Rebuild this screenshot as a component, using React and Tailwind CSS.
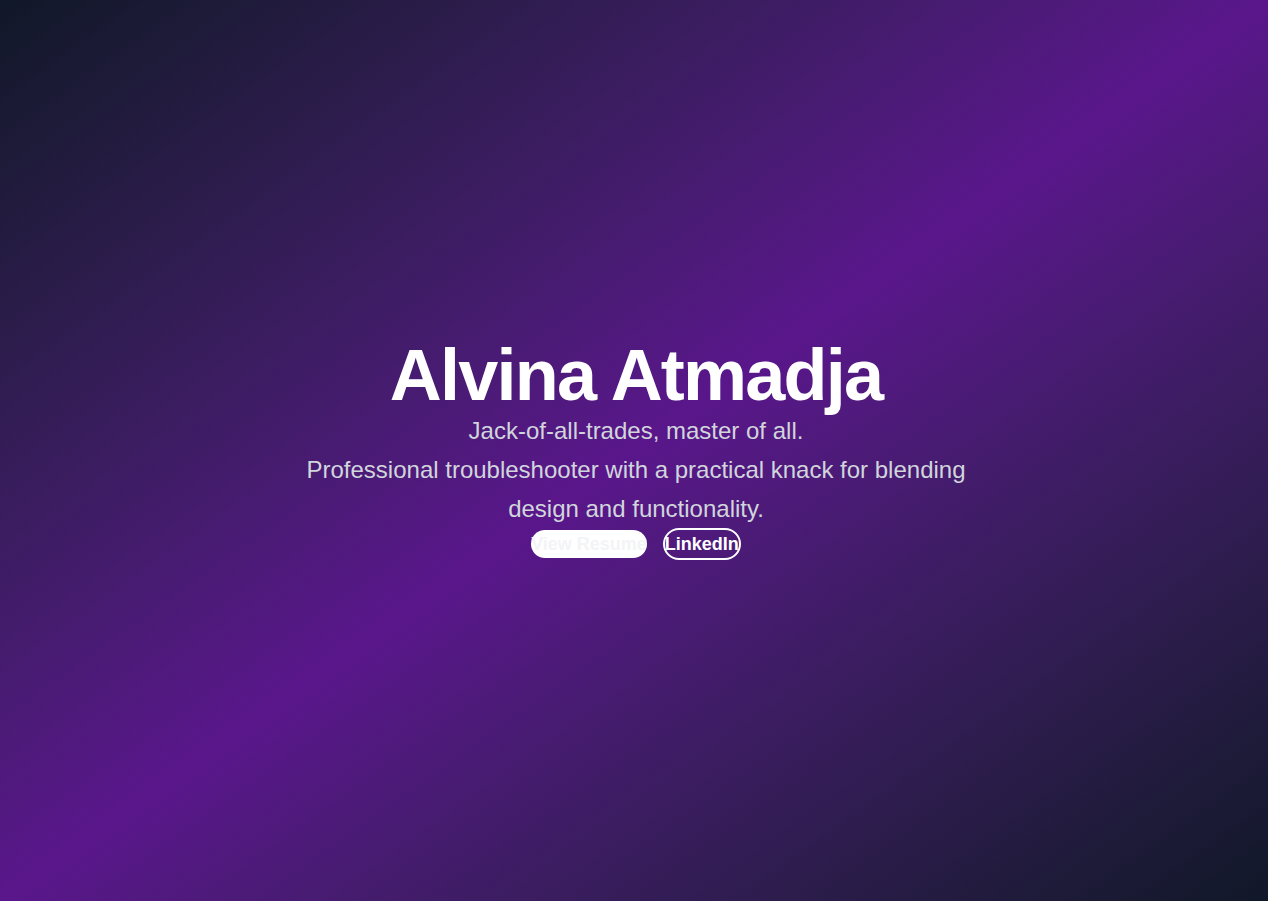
export default function App() {
  return (
    <div
      className="min-h-screen w-full flex flex-col items-center justify-center text-center pl-1 pb-0.5 bg-linear-to-br from-gray-900 via-purple-900 to-gray-900"
      style={{ fontFamily: '"Liberation Sans", Arial, sans-serif' }}
    >
      <h1 className="text-7xl leading-none font-bold tracking-tight text-white">
        Alvina Atmadja
      </h1>
      <p className="text-2xl leading-relaxed text-gray-300 max-w-2xl">
        Jack-of-all-trades, master of all.
        <br />
        Professional troubleshooter with a practical knack for blending design and functionality.
      </p>
      <div className="flex items-center gap-4">
        <a className="bg-white text-gray-100 font-bold text-lg rounded-full cursor-pointer">
          View Resume
        </a>
        <a className="border-2 border-white text-white font-bold text-lg rounded-full cursor-pointer">
          LinkedIn
        </a>
      </div>
    </div>
  );
}
